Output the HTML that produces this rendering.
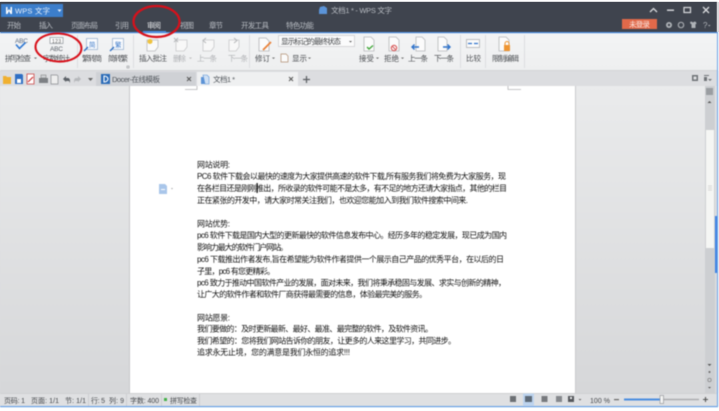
<!DOCTYPE html>
<html lang="zh"><head><meta charset="utf-8"><title>WPS 文字</title>
<style>
html,body{margin:0;padding:0;width:719px;height:411px;overflow:hidden}
body{background:linear-gradient(to bottom,#fff 0,#fff 2px,#3f444e 2px,#3f444e 32px,#f1f2f3 32px,#f1f2f3 71px,#dcdde0 71px,#dcdde0 86px,#e2e3e4 86px,#d8d9db 393px,#dfe0e2 393px,#dfe0e2 406px,#fff 407px)}
svg{display:block;filter:blur(.4px)}
text{font-family:"Liberation Sans","Noto Sans CJK SC",sans-serif;font-size:7.5px}
.t{fill:#b9bdc3}
.l{fill:#4a4d51}
.g{fill:#b0b2b5}
.s{fill:#45484c;font-size:7px}
.b{fill:#111;font-size:8px}
</style></head><body>
<svg width="719" height="411" viewBox="0 0 719 411" xmlns="http://www.w3.org/2000/svg">
<defs>
<linearGradient id="bg" x1="0" y1="0" x2="0" y2="1"><stop offset="0" stop-color="#eaebec"/><stop offset="1" stop-color="#d6d7d9"/></linearGradient>
<linearGradient id="rb" x1="0" y1="0" x2="0" y2="1"><stop offset="0" stop-color="#f3f4f5"/><stop offset="1" stop-color="#eeeff0"/></linearGradient>
</defs>
<rect x="717" y="0" width="2" height="411" fill="#fff"/>
<rect x="0" y="2" width="717" height="30" fill="#3f444e"/>
<rect x="1" y="4" width="62" height="13" fill="#3c7ecb"/>
<path d="M6 7v7h1.500l1.500-3 1.500 3h1.500v-7h-1.500v4l-1.500-2-1.500 2v-4z" fill="#fff"/>
<text x="15" y="13.500" fill="#e8f0fa" textLength="35">WPS 文字</text>
<path d="M57.500 9.500h4l-2 2.500z" fill="#e8f0fa"/>
<path d="M320 7l4-1 3 2v6h-8v-4z" fill="#5b94d8"/>
<text x="331" y="13" fill="#b9bdc3" textLength="61">文档1 * - WPS 文字</text>
<path d="M650 12l3.500-3.500 3.500 3.500" fill="none" stroke="#d9dbde" stroke-width="1.300"/>
<rect x="667" y="9.500" width="7" height="1.400" fill="#d9dbde"/>
<rect x="684" y="7.500" width="6.500" height="5" fill="none" stroke="#d9dbde" stroke-width="1.200"/>
<path d="M703 7l6 6M709 7l-6 6" stroke="#d9dbde" stroke-width="1.300"/>
<text class="t" x="7" y="28" textLength="14">开始</text>
<text class="t" x="39" y="28" textLength="14">插入</text>
<text class="t" x="71" y="28" textLength="27">页面布局</text>
<text class="t" x="115" y="28" textLength="14">引用</text>
<text x="147" y="28" fill="#e6e8ea" textLength="14">审阅</text>
<text class="t" x="180" y="28" textLength="14">视图</text>
<text class="t" x="209" y="28" textLength="14">章节</text>
<text class="t" x="241" y="28" textLength="28">开发工具</text>
<text class="t" x="286" y="28" textLength="28">特色功能</text>
<rect x="622" y="19" width="35" height="10" fill="#e1694a"/>
<text x="629" y="27" fill="#fbe6df" textLength="21">未登录</text>
<circle cx="669" cy="25" r="3" fill="#aeb2b7"/><circle cx="669" cy="25" r="1.200" fill="#3f444e"/>
<circle cx="681" cy="25" r="2.700" fill="none" stroke="#a5a9ae" stroke-width="1.200"/>
<path d="M690 22l1.500-.5 1.500 1 1.500-1 1.500.5.5 2h-1v4h-4v-4h-1z" fill="#aeb2b7"/>
<text x="703" y="28" fill="#aeb2b7" style="font-size:8px">?</text>
<path d="M708 25h2.500l-1.250 1.500z" fill="#aeb2b7"/>
<rect x="0" y="33" width="717" height="38" fill="url(#rb)"/>
<rect x="0" y="32" width="717" height="1.200" fill="#4a8de0"/>
<rect x="143" y="31" width="23" height="1.600" fill="#4a8de0"/>
<rect x="0" y="70" width="717" height="1" fill="#d4d5d7"/>
<g fill="#dcdde0">
<rect x="77" y="35" width="1" height="33"/><rect x="133" y="35" width="1" height="33"/>
<rect x="249" y="35" width="1" height="33"/><rect x="460" y="35" width="1" height="33"/>
<rect x="485" y="35" width="1" height="33"/><rect x="524" y="35" width="1" height="33"/>
</g>
<text x="15" y="43" fill="#5a6a80" style="font-size:6.500px" textLength="13">ABC</text>
<path d="M16 44.500l3.500 4 6-6" fill="none" stroke="#2f78d2" stroke-width="1.600"/>
<text class="l" x="5" y="61" textLength="26">拼写检查</text><path d="M34 57.500h3l-1.500 1.500z" fill="#666"/>
<rect x="50" y="37.500" width="13" height="6" fill="#fff" stroke="#8b9096" stroke-width=".7"/>
<text x="52" y="43" fill="#555" style="font-size:5px" textLength="9">123</text>
<text x="50" y="51" fill="#5a6068" style="font-size:6.500px" textLength="13">ABC</text>
<text class="l" x="43" y="61" textLength="27">字数统计</text>
<rect x="86.500" y="38.500" width="11" height="11" fill="#fbfcfe" stroke="#9db3d0" stroke-width=".8"/>
<text x="89" y="47" fill="#3b78c8" style="font-size:6.500px">简</text><path d="M84 51l4-4" stroke="#2e6fc2" stroke-width="1.300"/>
<text class="l" x="82" y="61" textLength="20">繁转简</text>
<rect x="112.500" y="38.500" width="11" height="11" fill="#fbfcfe" stroke="#9db3d0" stroke-width=".8"/>
<text x="115" y="47" fill="#3b78c8" style="font-size:6.500px">繁</text><path d="M110 51l4-4" stroke="#2e6fc2" stroke-width="1.300"/>
<text class="l" x="108" y="61" textLength="20">简转繁</text>
<path d="M127 66h2v2h-2z" fill="none" stroke="#8a8d91" stroke-width=".6"/>
<path d="M147 40h11v7l-3 4h-8z" fill="#fafafa" stroke="#b9bbbe" stroke-width=".8"/><circle cx="150" cy="41.500" r="2.500" fill="#efc33f"/>
<text class="l" x="139" y="61" textLength="28">插入批注</text>
<path d="M176 40h11v7l-3 4h-8z" fill="#f8f8f8" stroke="#c7c8ca" stroke-width=".8"/><path d="M174 38l4 4M178 38l-4 4" stroke="#b5b7b9"/>
<text class="g" x="173" y="61" textLength="13">删除</text><path d="M189 57.500h3l-1.500 1.500z" fill="#bbb"/>
<path d="M203 40h11v7l-3 4h-8z" fill="#f8f8f8" stroke="#c7c8ca" stroke-width=".8"/><path d="M206 38l-3 2.500 3 2.500" fill="none" stroke="#b5b7b9"/>
<text class="g" x="197" y="61" textLength="20">上一条</text>
<path d="M229 40h10v7l-3 4h-7z" fill="#f8f8f8" stroke="#c7c8ca" stroke-width=".8"/><path d="M234 38l3 2.500-3 2.500" fill="none" stroke="#b5b7b9"/>
<text class="g" x="228" y="61" textLength="20">下一条</text>
<path d="M259 38h7l3 3v10h-10z" fill="#fbfbfb" stroke="#b3b5b8" stroke-width=".8"/><path d="M263 50l8-8" stroke="#ea8239" stroke-width="1.800"/>
<text class="l" x="255" y="61" textLength="15">修订</text><path d="M272 57.500h3l-1.500 1.500z" fill="#666"/>
<rect x="278.500" y="35.500" width="76" height="11" fill="#fbfbfc" stroke="#d6d7d9"/>
<text x="281" y="44" fill="#3e4144" textLength="60">显示标记的最终状态</text>
<path d="M349 41h3l-1.500 1.500z" fill="#555"/>
<path d="M281 54h5l2 2v6h-7z" fill="#fbfbfb" stroke="#b08d70" stroke-width=".7"/>
<text class="l" x="292" y="61" textLength="15">显示</text><path d="M308 57.500h3l-1.500 1.500z" fill="#666"/>
<path d="M364 37h7l3 3v11h-10z" fill="#fbfbfb" stroke="#b5b7ba" stroke-width=".8"/><path d="M367 47l2 2 4-3.500" fill="none" stroke="#43a83c" stroke-width="1.400"/>
<text class="l" x="359" y="61" textLength="15">接受</text><path d="M376 57.500h3l-1.500 1.500z" fill="#666"/>
<path d="M389 37h7l3 3v11h-10z" fill="#fbfbfb" stroke="#b5b7ba" stroke-width=".8"/><circle cx="394" cy="48" r="2.700" fill="none" stroke="#d75a5a" stroke-width="1.100"/><path d="M392 46l4 4" stroke="#d75a5a"/>
<text class="l" x="384" y="61" textLength="15">拒绝</text><path d="M401 57.500h3l-1.500 1.500z" fill="#666"/>
<path d="M416 37h6l3 3v11h-9z" fill="#fbfbfb" stroke="#b5b7ba" stroke-width=".8"/><path d="M419 47h-7M414.500 44.500l-2.500 2.500 2.500 2.500" fill="none" stroke="#2e72ca" stroke-width="1.400"/>
<text class="l" x="408" y="61" textLength="20">上一条</text>
<path d="M438 37h6l3 3v11h-9z" fill="#fbfbfb" stroke="#b5b7ba" stroke-width=".8"/><path d="M443 47h7M447.500 44.500l2.500 2.500-2.500 2.500" fill="none" stroke="#2e72ca" stroke-width="1.400"/>
<text class="l" x="434" y="61" textLength="20">下一条</text>
<rect x="466.500" y="39.500" width="13" height="8" fill="#fbfbfb" stroke="#aeb0b3" stroke-width=".8"/>
<path d="M468 43.500h4M478 43.500h-4" stroke="#2e72ca" stroke-width="1.300"/>
<text class="l" x="466" y="61" textLength="15">比较</text>
<path d="M499 37h7l3 3v11h-10z" fill="#fbfbfb" stroke="#b5b7ba" stroke-width=".8"/>
<rect x="504" y="45" width="6" height="6" fill="#ee9532"/><path d="M505 45v-1.500a2 2 0 0 1 4 0v1.500" fill="none" stroke="#ee9532"/>
<text class="l" x="492" y="61" textLength="27">限制编辑</text>
<rect x="0" y="71" width="717" height="15" fill="#dcdde0"/>
<rect x="96" y="72" width="100" height="14" fill="#cfd1d5"/>
<rect x="197" y="72" width="101" height="14" fill="#eff0f1"/>
<path d="M3 76h3l1 1h4v7h-8z" fill="#f0b030"/>
<path d="M15 74h7l1 1v9h-8z" fill="#2f6fc4"/><rect x="17" y="79" width="4" height="4" fill="#fff"/>
<path d="M27 74h7v10h-7z" fill="#fff" stroke="#c44" stroke-width=".8"/><path d="M28 82l5-5" stroke="#c33" stroke-width="1.200"/>
<rect x="39" y="78" width="9" height="5" fill="#7d8084"/><rect x="41" y="75" width="5" height="3" fill="#d0d2d5" stroke="#777" stroke-width=".5"/>
<path d="M51 75h6l1 1v8h-7z" fill="#eee" stroke="#8a8d91" stroke-width=".7"/>
<path d="M63 79l3-3v2h2c1 0 2 1 2 3v2l-1-2h-3v1z" fill="#5d6268"/>
<path d="M81 79l-3-3v2h-2c-1 0-2 1-2 3v2l1-2h3v1z" fill="#b7b9bc"/>
<path d="M88 78h5l-2.500 3z" fill="#666"/>
<rect x="101" y="74" width="9" height="10" fill="#2b6cb8"/><path d="M104 76c3 0 4 2 4 3s-1 3-4 3z" fill="none" stroke="#fff" stroke-width="1.100"/>
<text x="112" y="82" fill="#50555b" textLength="48">Docer-在线模板</text>
<path d="M187 77l4 4M191 77l-4 4" stroke="#555" stroke-width="1"/>
<rect x="201" y="77" width="6" height="7" fill="#5c93d6"/><path d="M203 75h4l2 2v7h-4z" fill="#cfe0f4" stroke="#5c93d6" stroke-width=".6"/>
<text x="213" y="82" fill="#50555b" textLength="22">文档1 *</text>
<path d="M289 77l4 4M293 77l-4 4" stroke="#555" stroke-width="1"/>
<path d="M306.500 76v7M303 79.500h7" stroke="#5a5d61" stroke-width="1.200"/>
<rect x="692" y="75" width="6" height="6" fill="#6f7377"/><rect x="693.500" y="76.500" width="3" height="3" fill="#dcdde0"/>
<path d="M704 75h5v1h-5zM704 77h3v4h-3zM708 79h4l-2 2z" fill="#6f7377"/>
<rect x="0" y="86" width="705" height="307" fill="url(#bg)"/>
<rect x="129" y="86" width="1" height="307" fill="#c6c7c9"/>
<rect x="130" y="86" width="445" height="307" fill="#fff"/>
<rect x="575" y="86" width="1" height="307" fill="#c9cacc"/>
<path d="M197 86v3.500h-12M508 86v3.500h13" fill="none" stroke="#b4b5b7" stroke-width=".8"/>
<rect x="705" y="86" width="10" height="307" fill="#cdcfd2"/>
<rect x="706" y="130" width="8" height="118" fill="#f5f6f4"/>
<path d="M708 186h4M708 188h4M708 190h4" stroke="#ccc" stroke-width=".7"/>
<rect x="706" y="88" width="7" height="7" fill="#9a9da1"/>
<path d="M707.500 103h4l-2-2z" fill="#555"/>
<path d="M707.500 364h4l-2 2z" fill="#555"/>
<circle cx="709.500" cy="372" r="1" fill="#666"/><circle cx="709.500" cy="380" r="1.700" fill="none" stroke="#777" stroke-width=".6"/>
<path d="M708 387h3l-1.500 1.500z" fill="#555"/>
<rect x="715" y="216" width="3" height="57" fill="#3f83e3"/>
<rect x="717" y="32" width="1" height="375" fill="#6aa2e6"/>
<path d="M159 184h6l2 2v8h-8z" fill="#a9c6ea"/><rect x="161" y="189" width="4" height="1" fill="#fff"/>
<path d="M171 188h2l-1 1.500z" fill="#a8a9ab"/>
<text class="b" x="197" y="167.500" textLength="33">网站说明:</text>
<text class="b" x="197" y="179" textLength="309">PC6 软件下载会以最快的速度为大家提供高速的软件下载,所有服务我们将免费为大家服务&#xFF0C;现</text>
<text class="b" x="197" y="191" textLength="310">在各栏目还是刚刚推出&#xFF0C;所收录的软件可能不是太多&#xFF0C;有不足的地方还请大家指点&#xFF0C;其他的栏目</text>
<text class="b" x="197" y="203" textLength="271">正在紧张的开发中&#xFF0C;请大家时常关注我们&#xFF0C;也欢迎您能加入到我们软件搜索中间来.</text>
<rect x="256.500" y="183" width="1.200" height="10" fill="#111"/>
<text class="b" x="197" y="226.500" textLength="33">网站优势:</text>
<text class="b" x="197" y="238" textLength="310">pc6 软件下载是国内大型的更新最快的软件信息发布中心。经历多年的稳定发展&#xFF0C;现已成为国内</text>
<text class="b" x="197" y="250" textLength="91">影响力最大的软件门户网站。</text>
<text class="b" x="197" y="262" textLength="307">pc6 下载推出作者发布,旨在希望能为软件作者提供一个展示自己产品的优秀平台&#xFF0C;在以后的日</text>
<text class="b" x="197" y="274" textLength="78">子里&#xFF0C;pc6 有您更精彩。</text>
<text class="b" x="197" y="285.500" textLength="309">pc6 致力于推动中国软件产业的发展&#xFF0C;面对未来&#xFF0C;我们将秉承稳固与发展、求实与创新的精神&#xFF0C;</text>
<text class="b" x="197" y="297" textLength="230">让广大的软件作者和软件厂商获得最需要的信息&#xFF0C;体验最完美的服务。</text>
<text class="b" x="197" y="320.500" textLength="33">网站愿景:</text>
<text class="b" x="197" y="331.500" textLength="236">我们要做的&#xFF1A;及时更新最新、最好、最准、最完整的软件&#xFF0C;及软件资讯。</text>
<text class="b" x="197" y="343.500" textLength="259">我们希望的&#xFF1A;您将我们网站告诉你的朋友&#xFF0C;让更多的人来这里学习&#xFF0C;共同进步。</text>
<text class="b" x="197" y="355" textLength="153">追求永无止境&#xFF0C;您的满意是我们永恒的追求!!!</text>
<rect x="0" y="393" width="717" height="13" fill="#dfe0e2"/>
<rect x="0" y="393" width="717" height="1" fill="#cfd0d2"/>
<rect x="0" y="406" width="718" height="1.200" fill="#6aa2e6"/>
<g fill="#cdced1"><rect x="88" y="394" width="1" height="12"/><rect x="126" y="394" width="1" height="12"/><rect x="161" y="394" width="1" height="12"/><rect x="199" y="394" width="1" height="12"/></g>
<text class="s" x="4" y="403" textLength="21">页码: 1</text>
<text class="s" x="31" y="403" textLength="28">页面: 1/1</text>
<text class="s" x="65" y="403" textLength="21">节: 1/1</text>
<text class="s" x="91" y="403" textLength="14">行: 5</text>
<text class="s" x="109" y="403" textLength="15">列: 9</text>
<text class="s" x="130" y="403" textLength="29">字数: 400</text>
<rect x="164" y="398" width="3" height="3" fill="#45b04a"/>
<text class="s" x="170" y="403" textLength="27">拼写检查</text>
<rect x="510" y="396" width="6" height="6" fill="#6c7074"/>
<rect x="523" y="393.500" width="11" height="12" fill="#bcd3ee"/>
<rect x="525" y="396" width="7" height="6" fill="#5d6a78"/>
<rect x="541.500" y="396" width="6" height="6" fill="#777a7e"/>
<rect x="556" y="396" width="6" height="6" fill="#85888c"/>
<rect x="568" y="396" width="6" height="6" fill="#55585c"/><rect x="570" y="397" width="2" height="2" fill="#eee"/>
<path d="M578.500 399h3l-1.500 1.500z" fill="#666"/>
<text class="s" x="590" y="403" textLength="20">100 %</text>
<rect x="614" y="399" width="5" height="1.200" fill="#666"/>
<rect x="624" y="398.800" width="75" height="1.400" fill="#a8aaad"/>
<rect x="624" y="398.500" width="37" height="2" fill="#4a8de0"/>
<rect x="660" y="395.500" width="3.500" height="8" fill="#f4f4f4" stroke="#8a8c90" stroke-width=".6"/>
<path d="M703 399.500h5M705.500 397v5" stroke="#555" stroke-width="1.100"/>
<ellipse cx="58.500" cy="47.500" rx="23" ry="14" fill="none" stroke="#d8101a" stroke-width="2" transform="rotate(3 58 47)"/>
<ellipse cx="156.500" cy="21.500" rx="23" ry="15.500" fill="none" stroke="#d8101a" stroke-width="2.200"/>
</svg>
</body></html>
